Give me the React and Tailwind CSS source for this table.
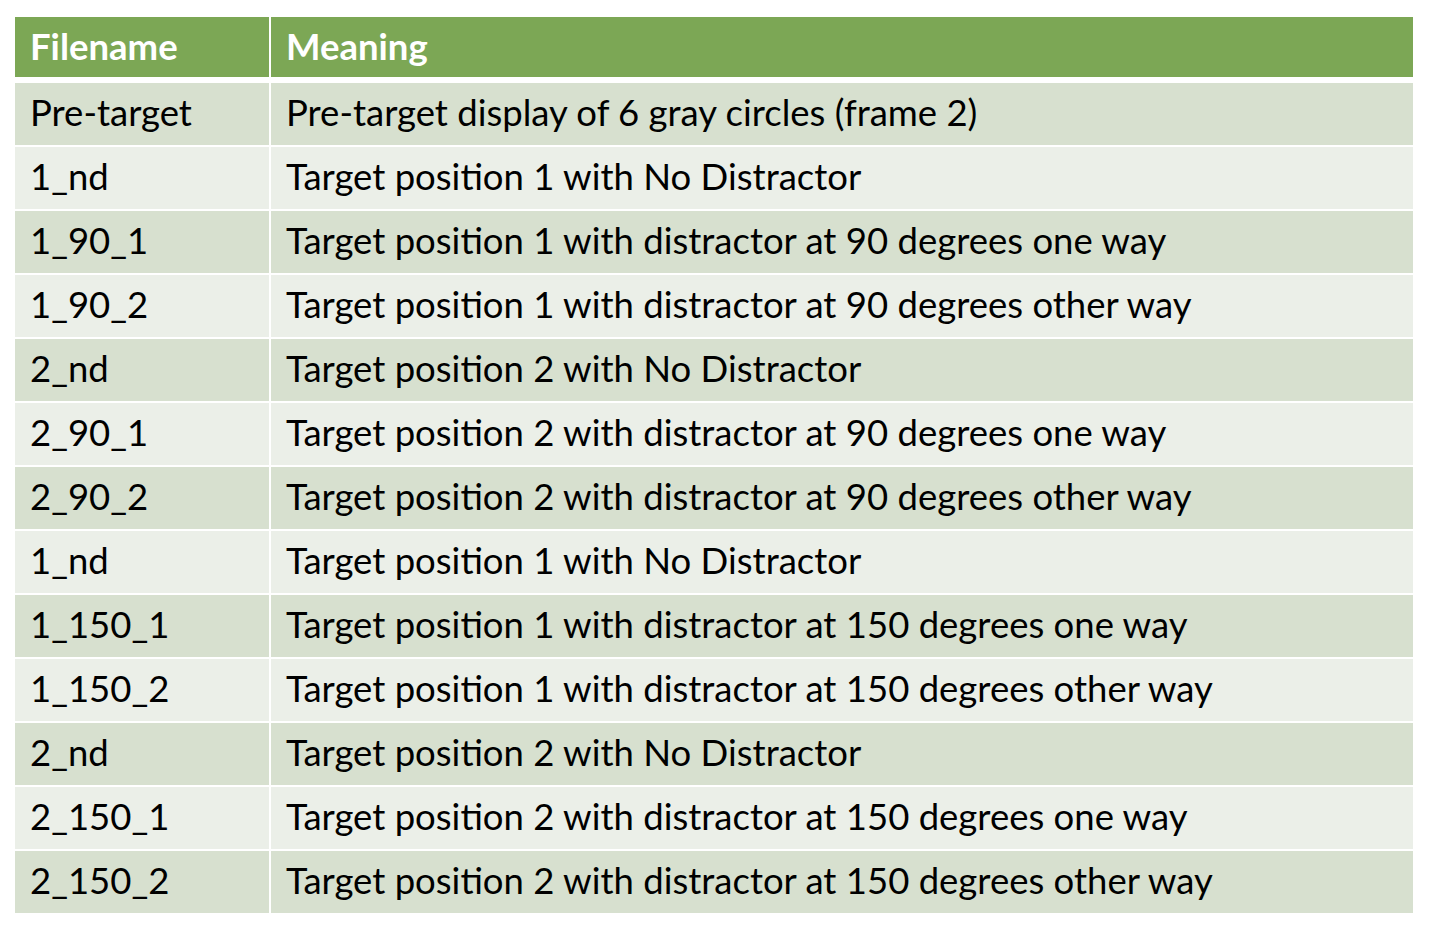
import React from 'react';

const rows = [
  ['Pre-target', 'Pre-target display of 6 gray circles (frame 2)'],
  ['1_nd', 'Target position 1 with No Distractor'],
  ['1_90_1', 'Target position 1 with distractor at 90 degrees one way'],
  ['1_90_2', 'Target position 1 with distractor at 90 degrees other way'],
  ['2_nd', 'Target position 2 with No Distractor'],
  ['2_90_1', 'Target position 2 with distractor at 90 degrees one way'],
  ['2_90_2', 'Target position 2 with distractor at 90 degrees other way'],
  ['1_nd', 'Target position 1 with No Distractor'],
  ['1_150_1', 'Target position 1 with distractor at 150 degrees one way'],
  ['1_150_2', 'Target position 1 with distractor at 150 degrees other way'],
  ['2_nd', 'Target position 2 with No Distractor'],
  ['2_150_1', 'Target position 2 with distractor at 150 degrees one way'],
  ['2_150_2', 'Target position 2 with distractor at 150 degrees other way'],
];

export default function App() {
  return (
    <div className="w-[1434px] h-[932px] bg-white pt-[17px] pl-[15px] font-['Lato',sans-serif]">
      <div className="w-[1398px] flex flex-col">
        <div className="flex h-[60px] bg-[#7ca755] text-white font-bold text-[36.5px] leading-none border-b-[6px] border-white box-content">
          <div className="w-[256px] border-r-2 border-white flex items-center pl-[15px] pb-[2px]">Filename</div>
          <div className="flex-1 flex items-center pl-[15px] pb-[2px]">Meaning</div>
        </div>
        {rows.map((r, i) => (
          <div
            key={i}
            className={`flex h-[62px] text-black text-[36.5px] leading-none ${i < rows.length - 1 ? 'border-b-2 border-white box-content' : ''} ${i % 2 === 0 ? 'bg-[#d7e0cf]' : 'bg-[#ebefe8]'}`}
          >
            <div className="w-[256px] border-r-2 border-white flex items-center pl-[15px] pb-[4px]">{r[0]}</div>
            <div className="flex-1 flex items-center pl-[15px] pb-[4px]">{r[1]}</div>
          </div>
        ))}
      </div>
    </div>
  );
}
